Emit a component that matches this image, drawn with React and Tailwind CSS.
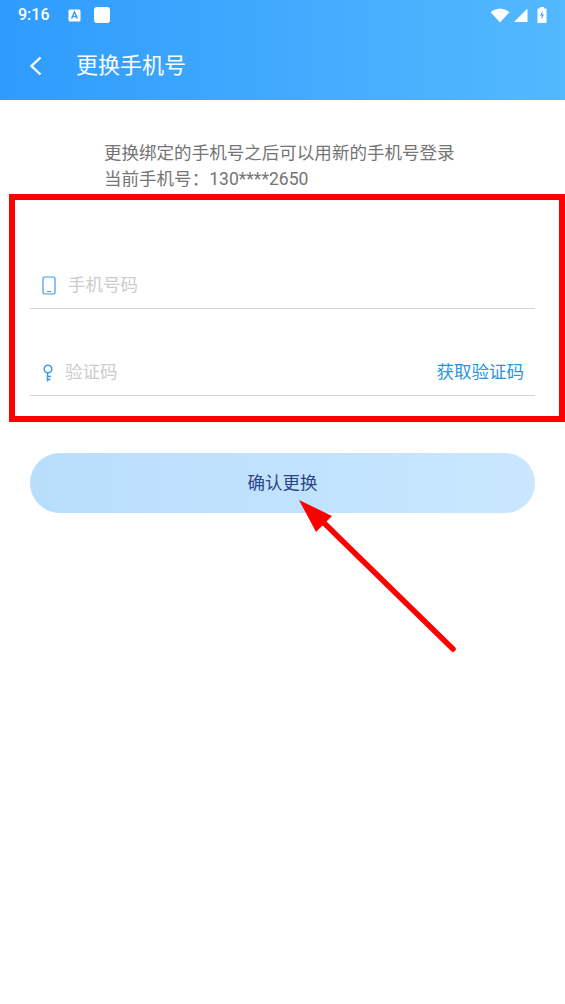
import React from 'react';

const cjk = "font-['Roboto','Noto_Sans_CJK_SC',sans-serif]";

const StatusBar = () => (
    <div className="flex items-center h-[30px] pl-[18px] pr-[18px] text-white">
        <span className="text-[16px] font-medium leading-none w-[34px]">9:16</span>
        <svg className="ml-[16px]" width="13" height="13" viewBox="0 0 13 13">
            <rect x="0.5" y="0.5" width="12" height="12" rx="1.5" fill="#fff" />
            <path d="M3.6 9.6 L6.5 3 L9.4 9.6 M4.6 7.6 H8.4" stroke="#2f9bfd" strokeWidth="1.4" fill="none" />
        </svg>
        <div className="ml-[13px] w-[16px] h-[16px] rounded-[3px] bg-white" />
        <div className="ml-auto flex items-center">
            <svg width="20" height="15" viewBox="0 0 20 15">
                <path d="M0.5 4 Q10 -3 19.5 4 L10 14.5 Z" fill="#fff" />
            </svg>
            <svg className="ml-[3px]" width="15" height="15" viewBox="0 0 15 15">
                <path d="M14.5 0.5 V14 H1 Z" fill="#fff" />
            </svg>
            <svg className="ml-[9px]" width="10" height="16" viewBox="0 0 10 16">
                <path d="M3 0 H7 V1.5 H9.5 V16 H0.5 V1.5 H3 Z" fill="#fff" />
                <path d="M6 3.5 L3 8.5 H5 L4 12.5 L7 7.5 H5 Z" fill="#2f9bfd" />
            </svg>
        </div>
    </div>
);

const App = () => {
    return (
        <div className={`relative w-[565px] h-[1004px] bg-white overflow-hidden ${cjk}`}>
            <header className="h-[100px] bg-gradient-to-r from-[#2f9bfd] to-[#52b9ff]">
                <StatusBar />
                <div className="flex items-center h-[70px] pt-[2px] pl-[29px]">
                    <svg width="14" height="20" viewBox="0 0 14 20" fill="none">
                        <path d="M11.5 1.5 L2.5 10 L11.5 18.5" stroke="#fff" strokeWidth="2.4" />
                    </svg>
                    <h1 className="ml-[33px] text-[22px] leading-none text-white">更换手机号</h1>
                </div>
            </header>

            <div className="pt-[40px] pl-[104px] text-[17.55px] leading-[26px] text-[#757575]">
                <p>更换绑定的手机号之后可以用新的手机号登录</p>
                <p>当前手机号：130****2650</p>
            </div>

            <form className="mt-[2px] ml-[9px] h-[228px] border-[6px] border-[#ff0000] pt-[49px] pl-[15px] pr-[24px]">
                <div className="flex items-center h-[60px] pt-[14px] border-b border-[#d2d2d2] pl-[12px]">
                    <svg width="14" height="19" viewBox="0 0 14 19" fill="none">
                        <rect x="1" y="1" width="12" height="17" rx="1.5" stroke="#3d9be6" strokeWidth="1.2" />
                        <path d="M5 15.5 H9" stroke="#3d9be6" strokeWidth="1" />
                    </svg>
                    <span className="ml-[12px] text-[17.5px] text-[#cccccc]">手机号码</span>
                </div>
                <div className="flex items-center h-[60px] pt-[14px] mt-[27px] border-b border-[#d2d2d2] pl-[12px] pr-[11px]">
                    <svg width="11" height="18" viewBox="0 0 11 18" fill="none">
                        <circle cx="6" cy="5" r="3.8" stroke="#3d9be6" strokeWidth="1.5" />
                        <path d="M5.5 9 V17.5 M5.5 12.5 H9 M5.5 15.5 H8.5" stroke="#3d9be6" strokeWidth="1.5" />
                    </svg>
                    <span className="ml-[12px] text-[17.5px] text-[#cccccc]">验证码</span>
                    <span className="ml-auto text-[17.5px] text-[#2a94e0]">获取验证码</span>
                </div>
            </form>

            <button className="block mt-[31px] ml-[30px] w-[505px] h-[60px] rounded-full bg-gradient-to-r from-[#b8defd] to-[#c9e7ff] text-[17.5px] text-[#2c4585]">
                确认更换
            </button>

            {/* annotation arrow */}
            <svg className="absolute left-0 top-0 pointer-events-none" width="565" height="1004" fill="none">
                <path d="M453 649 L322 521" stroke="#ff0000" strokeWidth="5.5" strokeLinecap="round" />
                <path d="M299 500 L332 516 L316 532 Z" fill="#ff0000" />
            </svg>
        </div>
    );
};

export default App;
